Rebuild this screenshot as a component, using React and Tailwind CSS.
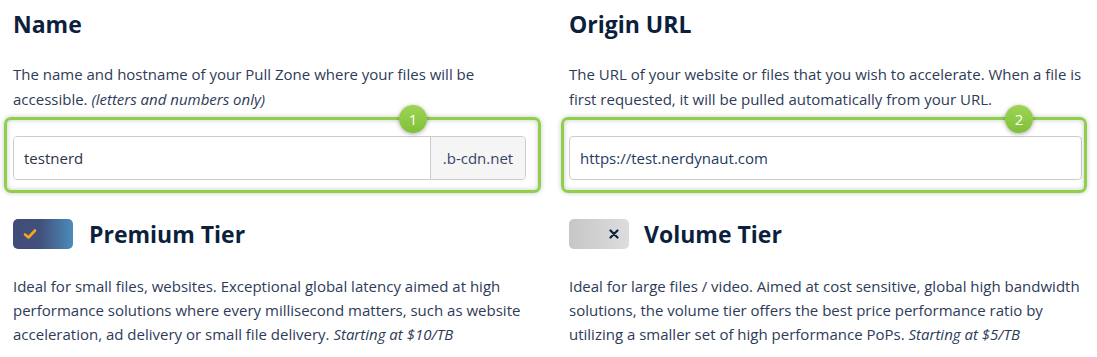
import React from 'react';

const body = { fontFamily: '"Open Sans", "Liberation Sans", sans-serif' };

const Badge = ({ n }) => (
  <div className="absolute top-[-15px] w-[28px] h-[28px] rounded-full bg-[linear-gradient(180deg,#9fd457,#7fbf38)] shadow-[0_1px_4px_rgba(0,0,0,0.35)] flex items-center justify-center text-white text-[15px] leading-none" style={{ ...body, left: n.left }}>
    {n.label}
  </div>
);

const Highlight = ({ inset, badge, children }) => (
  <div className="relative">
    {children}
    <div
      className="absolute border-[3px] border-[#8ed04a] rounded-[7px] shadow-[0_0_5px_rgba(0,0,0,0.22),inset_0_0_5px_rgba(0,0,0,0.22)] pointer-events-none"
      style={inset}
    >
      <Badge n={badge} />
    </div>
  </div>
);

const Toggle = ({ on }) =>
  on ? (
    <div className="w-[60px] h-[30px] rounded-[5px] bg-[linear-gradient(90deg,#404b78_0%,#42507c_45%,#4b8cbb_100%)] flex items-center pl-[10px]">
      <svg width="14" height="12" viewBox="0 0 14 12">
        <polyline points="2,6.5 5.5,9.5 12,2.5" fill="none" stroke="#f5a81c" strokeWidth="2.6" strokeLinecap="round" strokeLinejoin="round" />
      </svg>
    </div>
  ) : (
    <div className="w-[60px] h-[30px] rounded-[5px] bg-[linear-gradient(90deg,#c6c6c6,#dddddd)] flex items-center justify-end pr-[10px]">
      <svg width="10" height="10" viewBox="0 0 10 10">
        <path d="M1.5 1.5 L8.5 8.5 M8.5 1.5 L1.5 8.5" stroke="#0e2140" strokeWidth="2.2" strokeLinecap="round" />
      </svg>
    </div>
  );

const Heading = ({ children }) => (
  <h2 className="text-[23px] leading-[30px] font-bold text-[#0c1f3d]" style={body}>{children}</h2>
);

const Text = ({ children, className = '' }) => (
  <p className={`text-[15px] text-[#2e3b58] ${className}`} style={body}>{children}</p>
);

const App = () => {
  return (
    <div className="w-[1097px] h-[357px] bg-white overflow-hidden pl-[13px] pt-[9px] flex gap-[43px]" style={body}>
      {/* Left column */}
      <div className="w-[513px] flex flex-col">
        <Heading>Name</Heading>
        <Text className="leading-[25px] mt-[23px]">
          The name and hostname of your Pull Zone where your files will be accessible. <em>(letters and numbers only)</em>
        </Text>
        <div className="mt-[24px]">
          <Highlight inset={{ left: -9, right: -15, top: -19, bottom: -13 }} badge={{ label: '1', left: 392 }}>
            <div className="flex h-[44px] border border-[#cccccc] rounded-[4px] overflow-hidden">
              <div className="flex-1 flex items-center px-[10px] text-[15px] text-[#2b3448] bg-white">testnerd</div>
              <div className="w-[95px] flex items-center justify-center border-l border-[#cccccc] bg-[#f5f5f5] text-[15px] text-[#3a4466]">.b-cdn.net</div>
            </div>
          </Highlight>
        </div>
        <div className="mt-[39px] flex items-center gap-[16px]">
          <Toggle on />
          <h2 className="text-[23px] leading-[30px] font-bold text-[#0c1f3d]" style={body}>Premium Tier</h2>
        </div>
        <Text className="leading-[24px] mt-[25px]">
          Ideal for small files, websites. Exceptional global latency aimed at high performance solutions where every millisecond matters, such as website acceleration, ad delivery or small file delivery. <em>Starting at $10/TB</em>
        </Text>
      </div>

      {/* Right column */}
      <div className="w-[513px] flex flex-col">
        <Heading>Origin URL</Heading>
        <Text className="leading-[25px] mt-[23px]">
          The URL of your website or files that you wish to accelerate. When a file is first requested, it will be pulled automatically from your URL.
        </Text>
        <div className="mt-[24px]">
          <Highlight inset={{ left: -8, right: -5, top: -19, bottom: -13 }} badge={{ label: '2', left: 441 }}>
            <div className="flex items-center h-[44px] border border-[#cccccc] rounded-[4px] px-[10px] text-[15px] text-[#243a5e] bg-white">
              https://test.nerdynaut.com
            </div>
          </Highlight>
        </div>
        <div className="mt-[39px] flex items-center gap-[15px]">
          <Toggle on={false} />
          <h2 className="text-[23px] leading-[30px] font-bold text-[#0c1f3d]" style={body}>Volume Tier</h2>
        </div>
        <Text className="leading-[24px] mt-[25px]">
          Ideal for large files / video. Aimed at cost sensitive, global high bandwidth solutions, the volume tier offers the best price performance ratio by utilizing a smaller set of high performance PoPs. <em>Starting at $5/TB</em>
        </Text>
      </div>
    </div>
  );
};

export default App;
